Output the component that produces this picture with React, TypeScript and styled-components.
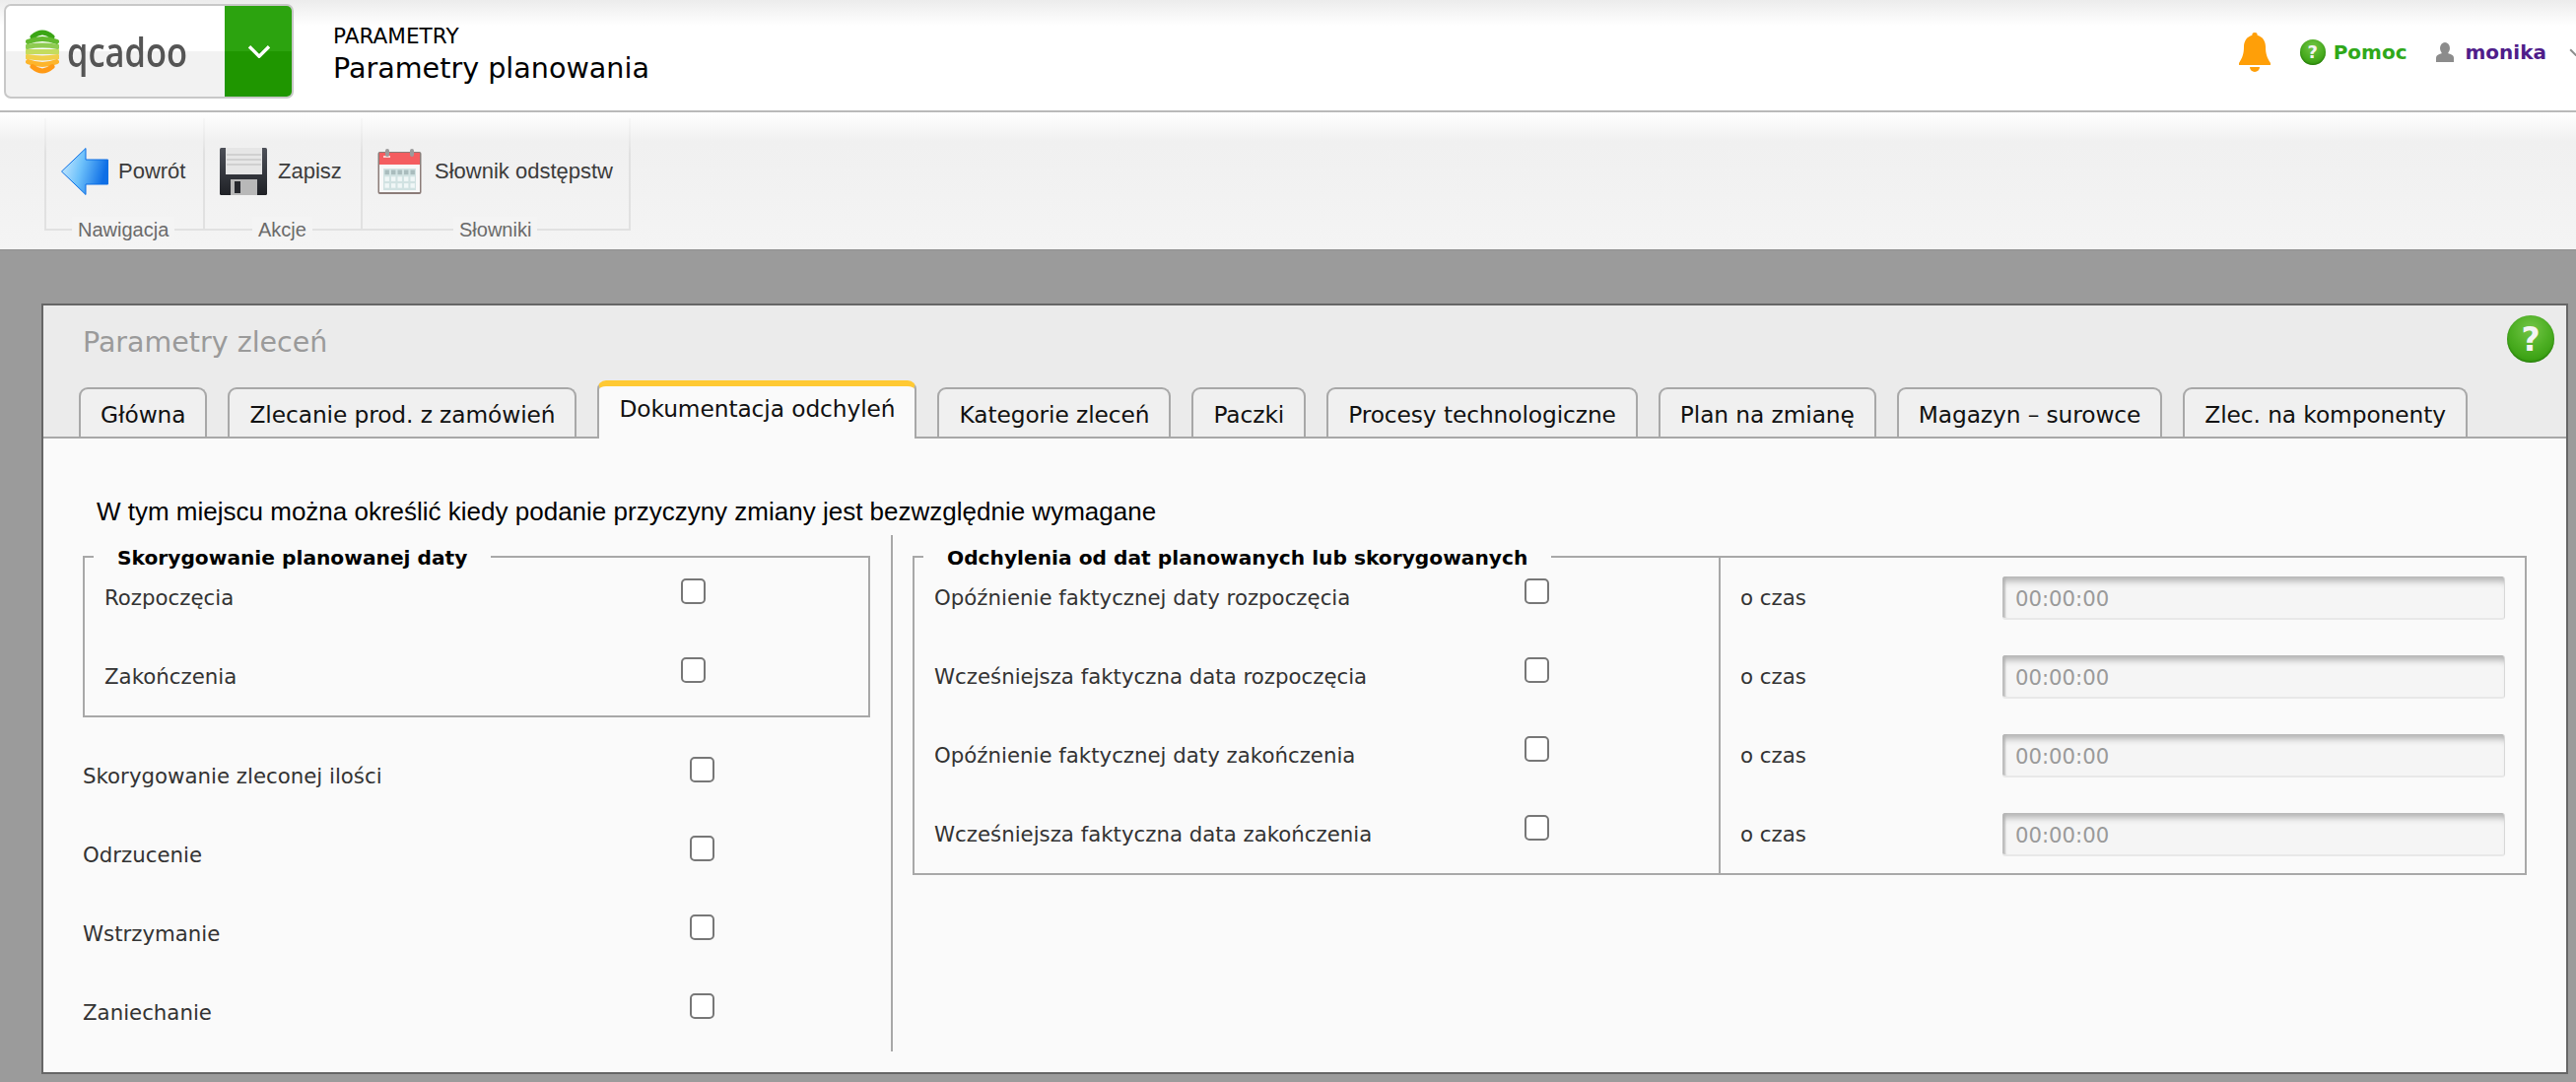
import styled, { createGlobalStyle } from 'styled-components'

const lucida = `"DejaVu Sans", "Noto Sans", sans-serif`
const arial = `"Liberation Sans", Arial, sans-serif`

const GlobalStyle = createGlobalStyle`
  html, body {
    margin: 0;
    padding: 0;
    background: #9b9b9b;
    overflow: hidden;
  }
  * {
    box-sizing: border-box;
  }
`

const Page = styled.div`
  width: 2614px;
  height: 1098px;
  display: flex;
  flex-direction: column;
  overflow: hidden;
`

const Header = styled.header`
  height: 114px;
  flex: none;
  display: flex;
  align-items: flex-start;
  padding: 4px 0 0 4px;
  border-bottom: 2px solid #b9b9b9;
  background: linear-gradient(#ececec 0, #ffffff 26px);
`

const LogoBox = styled.div`
  width: 294px;
  height: 96px;
  flex: none;
  display: flex;
  border-radius: 7px;
  overflow: hidden;
  border: 2px solid #c8c8c8;
  background: linear-gradient(#ffffff 50%, #f2f2f2 50%);
`

const LogoMark = styled.div`
  width: 222px;
  flex: none;
  display: flex;
  align-items: center;
  gap: 8px;
  padding-left: 20px;
  filter: blur(0.5px);
`

const LogoText = styled.span`
  display: inline-block;
  transform: scaleX(0.82);
  transform-origin: left center;
  font-family: "Open Sans", sans-serif;
  font-weight: 600;
  font-size: 42px;
  line-height: 1;
  color: #555555;
`

const LogoDrop = styled.div`
  flex: 1;
  margin: -2px -2px -2px 0;
  display: flex;
  align-items: center;
  justify-content: center;
  background: linear-gradient(#2ca30f 50%, #1f9600 50%);
`

const TitleBlock = styled.div`
  margin-left: 40px;
  padding-top: 18px;
  font-family: ${lucida};
  color: #000000;
`

const Crumb = styled.div`
  font-size: 21.6px;
  line-height: 30px;
`

const PageTitle = styled.div`
  font-size: 28.6px;
  line-height: 34px;
`

const UserBar = styled.div`
  margin-left: auto;
  height: 100%;
  display: flex;
  align-items: center;
  padding-bottom: 10px;
  font-family: ${lucida};
  font-weight: bold;
  font-size: 20px;
`

const HelpLink = styled.span`
  margin: 0 29px 0 30px;
  display: flex;
  align-items: center;
  gap: 8px;
  color: #2fa81a;
`

const UserName = styled.span`
  margin-left: 12px;
  color: #4f1d8a;
`

const UserDrop = styled.span`
  width: 30px;
  flex: none;
  display: flex;
  padding-left: 23px;
`

const Sphere = styled.span<{ $size: number }>`
  width: ${(p) => p.$size}px;
  height: ${(p) => p.$size}px;
  flex: none;
  display: flex;
  align-items: center;
  justify-content: center;
  border-radius: 50%;
  background: radial-gradient(circle at 50% 30%, #74c548 0, #4fb025 45%, #2a9405 100%);
  box-shadow: inset 0 -1px 2px rgba(20, 90, 0, 0.6);
  color: #f4f4f4;
  font-family: ${lucida};
  font-weight: bold;
  font-size: ${(p) => Math.round(p.$size * 0.68)}px;
  line-height: 1;
`

const Toolbar = styled.div`
  height: 140px;
  flex: none;
  display: flex;
  padding: 6px 0 0 45px;
  border-bottom: 1px solid #8f8f8f;
  background: linear-gradient(#ffffff 0, #f0f0f0 30px, #f4f4f4 100%);
`

const Group = styled.div<{ $width: number; $last?: boolean }>`
  position: relative;
  width: ${(p) => p.$width}px;
  height: 114px;
  flex: none;
  padding: 30px 0 0 15px;
  border-left: 2px solid #e1e1e1;
  border-bottom: 2px solid #e1e1e1;
  border-right: ${(p) => (p.$last ? '2px solid #e1e1e1' : 'none')};
  border-image: linear-gradient(#f8f8f8, #e1e1e1 36px) 1;
`

const GroupLabel = styled.span<{ $left: number }>`
  position: absolute;
  left: ${(p) => p.$left}px;
  bottom: -14px;
  padding: 0 6px;
  background: #f4f4f4;
  font-family: ${arial};
  font-size: 20px;
  line-height: 26px;
  color: #6a6a6a;
`

const ToolButton = styled.div<{ $gap: number }>`
  display: flex;
  align-items: center;
  gap: ${(p) => p.$gap}px;
  height: 48px;
  font-family: ${arial};
  font-size: 22px;
  color: #3c3c3c;
  white-space: nowrap;
`

const Workspace = styled.main`
  flex: 1;
  padding: 54px 8px 8px 42px;
`

const Panel = styled.section`
  height: 782px;
  display: flex;
  flex-direction: column;
  border: 2px solid #666666;
  background: #fafafa;
`

const PanelHead = styled.div`
  position: relative;
  height: 135px;
  flex: none;
  display: flex;
  flex-direction: column;
  justify-content: space-between;
  background: #ebebeb;
`

const PanelTitle = styled.h1`
  margin: 0;
  padding: 18px 0 0 40px;
  font-family: ${lucida};
  font-weight: normal;
  font-size: 28.5px;
  line-height: 40px;
  color: #9a9a9a;
`

const PanelHelp = styled.div`
  position: absolute;
  top: 10px;
  right: 12px;
`

const TabRow = styled.div`
  display: flex;
  align-items: flex-end;
  gap: 21px;
  padding-left: 36px;
  border-bottom: 2px solid #a8a8a8;
`

const Tab = styled.div<{ $active?: boolean }>`
  height: ${(p) => (p.$active ? 59 : 50)}px;
  margin-bottom: ${(p) => (p.$active ? -2 : 0)}px;
  padding: ${(p) => (p.$active ? '7px 20px 0' : '10px 20px 0')};
  border: 2px solid #a8a8a8;
  border-top: ${(p) => (p.$active ? '6px solid #ffc933' : '2px solid #a8a8a8')};
  border-bottom: none;
  border-radius: 9px 9px 0 0;
  background: ${(p) => (p.$active ? '#fafafa' : '#f0f0f0')};
  font-family: ${lucida};
  font-size: 23.3px;
  letter-spacing: -0.09px;
  line-height: 32px;
  color: #111111;
  white-space: nowrap;
`

const PanelBody = styled.div`
  flex: 1;
  padding: 59px 40px 0 40px;
`

const Intro = styled.p`
  margin: 0 0 9px 14px;
  font-family: ${arial};
  font-size: 26px;
  line-height: 30px;
  color: #000000;
`

const Columns = styled.div`
  display: flex;
  height: 524px;
`

const LeftColumn = styled.div`
  width: 799px;
  flex: none;
  padding-top: 21px;
`

const LowerRows = styled.div`
  margin-top: 19px;
`

const RightColumn = styled.div`
  flex: 1;
  margin-left: 21px;
  padding: 21px 0 0 20px;
  border-left: 2px solid #a8a8a8;
`

const FieldBox = styled.div<{ $split?: boolean }>`
  position: relative;
  display: ${(p) => (p.$split ? 'flex' : 'block')};
  border: 2px solid #a8a8a8;
`

const Legend = styled.span`
  position: absolute;
  top: -15px;
  left: 9px;
  padding: 0 24px;
  background: #fafafa;
  font-family: ${lucida};
  font-weight: bold;
  font-size: 20.2px;
  line-height: 30px;
  color: #000000;
  white-space: nowrap;
`

const Row = styled.div<{ $label: number; $indent: number }>`
  height: 80px;
  display: grid;
  grid-template-columns: ${(p) => p.$label}px auto;
  align-items: center;
  justify-content: start;
  padding-left: ${(p) => p.$indent}px;
`

const RowLabel = styled.label`
  font-family: ${lucida};
  font-size: 21.3px;
  color: #333333;
  white-space: nowrap;
`

const TickBox = styled.input.attrs({ type: 'checkbox' })`
  appearance: none;
  width: 25px;
  height: 26px;
  margin: 0 0 13px;
  border: 2px solid #777777;
  border-radius: 5px;
  background: #ffffff;
`

const SplitLeft = styled.div`
  width: 816px;
  flex: none;
`

const SplitRight = styled.div`
  flex: 1;
  border-left: 2px solid #a8a8a8;
`

const TimeInput = styled.input`
  width: 510px;
  height: 44px;
  margin-top: 2px;
  padding: 2px 0 0 13px;
  border: none;
  border-right: 1px solid #d8d8d8;
  border-bottom: 2px solid #e8e8e8;
  border-radius: 3px;
  background: #f5f5f5;
  box-shadow: inset 0 10px 6px -5px #b4b4b4, inset 5px 0 2px -2px #bebebe;
  font-family: ${lucida};
  font-size: 21.2px;
  color: #9a9a9a;
  opacity: 1;
`

function LogoIcon() {
  const bands = [
    { y: 4, w: 10, c: '#3aa514' },
    { y: 10.5, w: 14.5, c: '#62b92e' },
    { y: 17, w: 15.5, c: '#8ecb50' },
    { y: 23.5, w: 15.5, c: '#c4dc5e' },
    { y: 30, w: 15.5, c: '#f0cf4a' },
    { y: 36.5, w: 14.5, c: '#fdb52c' },
    { y: 43, w: 10, c: '#ff9a16' },
  ]
  return (
    <svg width="34" height="47" viewBox="0 0 34 47" fill="none">
      {bands.map((b) => {
        const bend = (23.5 - b.y) * 0.22
        return (
          <path
            key={b.y}
            d={`M${17 - b.w} ${b.y + bend} Q17 ${b.y - bend} ${17 + b.w} ${b.y + bend}`}
            stroke={b.c}
            strokeWidth="5"
            strokeLinecap="round"
          />
        )
      })}
    </svg>
  )
}

function Chevron({ color, size = 24 }: { color: string; size?: number }) {
  return (
    <svg width={size} height={size * 0.6} viewBox="0 0 24 14" fill="none" style={{ flex: 'none' }}>
      <path d="M2 2 L12 12 L22 2" stroke={color} strokeWidth="3.4" />
    </svg>
  )
}

function BellIcon() {
  return (
    <svg width="32" height="41" viewBox="0 0 32 41">
      <path
        d="M16 0 a2.6 2.6 0 0 1 2.6 2.8 C24 4.2 27 9 27 14.5 c0 7 1.4 11 5 16.5 v2 H0 v-2 c3.6-5.5 5-9.5 5-16.5 C5 9 8 4.2 13.4 2.8 A2.6 2.6 0 0 1 16 0 Z"
        fill="#ff9f08"
      />
      <path d="M11 35 h10 a5 5 0 0 1 -10 0 Z" fill="#ff9f08" />
    </svg>
  )
}

function UserIcon() {
  return (
    <svg width="18" height="20" viewBox="0 0 18 20">
      <ellipse cx="9" cy="6" rx="5" ry="6" fill="#8c8c8c" />
      <path d="M0 20 v-4 c0-3 3-4 6-5 h6 c3 1 6 2 6 5 v4 Z" fill="#8c8c8c" />
    </svg>
  )
}

function BackIcon() {
  return (
    <svg width="48" height="48" viewBox="0 0 48 48">
      <defs>
        <linearGradient id="backFill" x1="0" y1="0" x2="1" y2="0.25">
          <stop offset="0" stopColor="#d4efff" />
          <stop offset="0.5" stopColor="#6cc0fa" />
          <stop offset="1" stopColor="#0f6fe6" />
        </linearGradient>
      </defs>
      <path d="M0.5 24 L25 0.5 V12 H47.5 V37 H25 V47.5 Z" fill="url(#backFill)" stroke="#0d6fe4" strokeWidth="1" />
    </svg>
  )
}

function SaveIcon() {
  return (
    <svg width="48" height="48" viewBox="0 0 48 48">
      <defs>
        <linearGradient id="diskFill" x1="0" y1="0" x2="0" y2="1">
          <stop offset="0" stopColor="#4d5058" />
          <stop offset="1" stopColor="#1f2126" />
        </linearGradient>
      </defs>
      <rect width="48" height="48" rx="1.5" fill="url(#diskFill)" />
      <rect x="6" y="0" width="37" height="27" fill="#e6e6e6" />
      <path d="M7 7 H42 M7 12 H42 M7 17 H42" stroke="#c9c9c9" strokeWidth="1.4" />
      <rect x="11" y="32" width="27" height="16" fill="#b8b8b8" />
      <rect x="15" y="34" width="6" height="12" fill="#26282d" />
    </svg>
  )
}

function CalendarIcon() {
  return (
    <svg width="45" height="46" viewBox="0 0 45 46">
      <rect x="0.5" y="3" width="44" height="43" rx="2" fill="#8b7c78" />
      <rect x="2" y="4" width="41" height="40" fill="#f8f8f8" />
      <rect x="2" y="4" width="41" height="12" fill="#f45d60" />
      <rect x="6" y="7" width="7" height="2" fill="#ffd0d0" />
      <rect x="6" y="20" width="33" height="22" fill="#d1e2e2" />
      {[0, 1, 2, 3, 4].map((c) =>
        [0, 1, 2].map((r) => (
          <rect
            key={`${c}-${r}`}
            x={7.5 + c * 6.5}
            y={21.5 + r * 6.8}
            width="4.4"
            height="4.6"
            fill={r === 0 ? '#a9bcbd' : '#f0f7f7'}
          />
        )),
      )}
      <rect x="8" y="0" width="4" height="8" rx="2" fill="#9b9b9b" />
      <rect x="33" y="0" width="4" height="8" rx="2" fill="#9b9b9b" />
    </svg>
  )
}

const tabs = [
  'Główna',
  'Zlecanie prod. z zamówień',
  'Dokumentacja odchyleń',
  'Kategorie zleceń',
  'Paczki',
  'Procesy technologiczne',
  'Plan na zmianę',
  'Magazyn – surowce',
  'Zlec. na komponenty',
]

const leftRows = ['Skorygowanie zleconej ilości', 'Odrzucenie', 'Wstrzymanie', 'Zaniechanie']

const rightRows = [
  'Opóźnienie faktycznej daty rozpoczęcia',
  'Wcześniejsza faktyczna data rozpoczęcia',
  'Opóźnienie faktycznej daty zakończenia',
  'Wcześniejsza faktyczna data zakończenia',
]

function App() {
  return (
    <Page>
      <GlobalStyle />
      <Header>
        <LogoBox>
          <LogoMark>
            <LogoIcon />
            <LogoText>qcadoo</LogoText>
          </LogoMark>
          <LogoDrop>
            <Chevron color="#ffffff" />
          </LogoDrop>
        </LogoBox>
        <TitleBlock>
          <Crumb>PARAMETRY</Crumb>
          <PageTitle>Parametry planowania</PageTitle>
        </TitleBlock>
        <UserBar>
          <BellIcon />
          <HelpLink>
            <Sphere $size={26}>?</Sphere>
            Pomoc
          </HelpLink>
          <UserIcon />
          <UserName>monika</UserName>
          <UserDrop>
            <Chevron color="#8c8c8c" size={14} />
          </UserDrop>
        </UserBar>
      </Header>
      <Toolbar>
        <Group $width={161}>
          <ToolButton $gap={10}>
            <BackIcon />
            Powrót
          </ToolButton>
          <GroupLabel $left={26}>Nawigacja</GroupLabel>
        </Group>
        <Group $width={160}>
          <ToolButton $gap={11}>
            <SaveIcon />
            Zapisz
          </ToolButton>
          <GroupLabel $left={48}>Akcje</GroupLabel>
        </Group>
        <Group $width={274} $last>
          <ToolButton $gap={13}>
            <CalendarIcon />
            Słownik odstępstw
          </ToolButton>
          <GroupLabel $left={92}>Słowniki</GroupLabel>
        </Group>
      </Toolbar>
      <Workspace>
        <Panel>
          <PanelHead>
            <PanelTitle>Parametry zleceń</PanelTitle>
            <PanelHelp>
              <Sphere $size={48}>?</Sphere>
            </PanelHelp>
            <TabRow>
              {tabs.map((t, i) => (
                <Tab key={t} $active={i === 2}>
                  {t}
                </Tab>
              ))}
            </TabRow>
          </PanelHead>
          <PanelBody>
            <Intro>W tym miejscu można określić kiedy podanie przyczyny zmiany jest bezwzględnie wymagane</Intro>
            <Columns>
              <LeftColumn>
                <FieldBox>
                  <Legend>Skorygowanie planowanej daty</Legend>
                  <Row $label={585} $indent={20}>
                    <RowLabel>Rozpoczęcia</RowLabel>
                    <TickBox />
                  </Row>
                  <Row $label={585} $indent={20}>
                    <RowLabel>Zakończenia</RowLabel>
                    <TickBox />
                  </Row>
                </FieldBox>
                <LowerRows>
                  {leftRows.map((t) => (
                    <Row key={t} $label={616} $indent={0}>
                      <RowLabel>{t}</RowLabel>
                      <TickBox />
                    </Row>
                  ))}
                </LowerRows>
              </LeftColumn>
              <RightColumn>
                <FieldBox $split>
                  <Legend>Odchylenia od dat planowanych lub skorygowanych</Legend>
                  <SplitLeft>
                    {rightRows.map((t) => (
                      <Row key={t} $label={599} $indent={20}>
                        <RowLabel>{t}</RowLabel>
                        <TickBox />
                      </Row>
                    ))}
                  </SplitLeft>
                  <SplitRight>
                    {rightRows.map((t) => (
                      <Row key={t} $label={266} $indent={20}>
                        <RowLabel>o czas</RowLabel>
                        <TimeInput disabled value="00:00:00" readOnly />
                      </Row>
                    ))}
                  </SplitRight>
                </FieldBox>
              </RightColumn>
            </Columns>
          </PanelBody>
        </Panel>
      </Workspace>
    </Page>
  )
}

export default App
